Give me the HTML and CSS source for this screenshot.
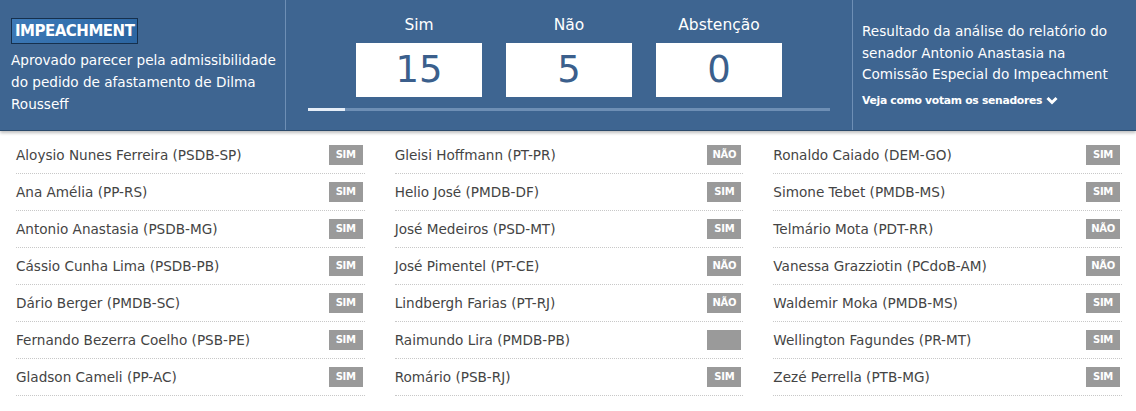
FILE: index.html
```html
<!DOCTYPE html>
<html lang="pt-BR">

<head>
    <meta charset="UTF-8">
    <title>Impeachment - Votação na Comissão</title>
    <link rel="stylesheet" href="styles.css">
</head>

<body>
    <header class="votes-header">
        <div class="header-left">
            <span class="tag">IMPEACHMENT</span>
            <p>Aprovado parecer pela admissibilidade do pedido de afastamento de Dilma Rousseff</p>
        </div>

        <div class="header-center">
            <div class="totals">
                <div class="total">
                    <span class="total-label">Sim</span>
                    <span class="total-box">15</span>
                </div>
                <div class="total">
                    <span class="total-label">Não</span>
                    <span class="total-box">5</span>
                </div>
                <div class="total">
                    <span class="total-label">Abstenção</span>
                    <span class="total-box">0</span>
                </div>
            </div>
            <div class="progress"><div class="progress-fill"></div></div>
        </div>

        <div class="header-right">
            <p>Resultado da análise do relatório do senador Antonio Anastasia na Comissão Especial do Impeachment</p>
            <a href="#lista" class="more-link">Veja como votam os senadores
                <svg width="12" height="9" viewBox="0 0 12 9"><path d="M1.5 2 L6 6.5 L10.5 2" fill="none" stroke="#fff" stroke-width="3"/></svg>
            </a>
        </div>
    </header>

    <section id="lista" class="senators">
        <ul class="column">
            <li><span>Aloysio Nunes Ferreira (PSDB-SP)</span><b class="vote">SIM</b></li>
            <li><span>Ana Amélia (PP-RS)</span><b class="vote">SIM</b></li>
            <li><span>Antonio Anastasia (PSDB-MG)</span><b class="vote">SIM</b></li>
            <li><span>Cássio Cunha Lima (PSDB-PB)</span><b class="vote">SIM</b></li>
            <li><span>Dário Berger (PMDB-SC)</span><b class="vote">SIM</b></li>
            <li><span>Fernando Bezerra Coelho (PSB-PE)</span><b class="vote">SIM</b></li>
            <li><span>Gladson Cameli (PP-AC)</span><b class="vote">SIM</b></li>
        </ul>
        <ul class="column">
            <li><span>Gleisi Hoffmann (PT-PR)</span><b class="vote">NÃO</b></li>
            <li><span>Helio José (PMDB-DF)</span><b class="vote">SIM</b></li>
            <li><span>José Medeiros (PSD-MT)</span><b class="vote">SIM</b></li>
            <li><span>José Pimentel (PT-CE)</span><b class="vote">NÃO</b></li>
            <li><span>Lindbergh Farias (PT-RJ)</span><b class="vote">NÃO</b></li>
            <li><span>Raimundo Lira (PMDB-PB)</span><b class="vote"></b></li>
            <li><span>Romário (PSB-RJ)</span><b class="vote">SIM</b></li>
        </ul>
        <ul class="column">
            <li><span>Ronaldo Caiado (DEM-GO)</span><b class="vote">SIM</b></li>
            <li><span>Simone Tebet (PMDB-MS)</span><b class="vote">SIM</b></li>
            <li><span>Telmário Mota (PDT-RR)</span><b class="vote">NÃO</b></li>
            <li><span>Vanessa Grazziotin (PCdoB-AM)</span><b class="vote">NÃO</b></li>
            <li><span>Waldemir Moka (PMDB-MS)</span><b class="vote">SIM</b></li>
            <li><span>Wellington Fagundes (PR-MT)</span><b class="vote">SIM</b></li>
            <li><span>Zezé Perrella (PTB-MG)</span><b class="vote">SIM</b></li>
        </ul>
    </section>
</body>

</html>
```

FILE: styles.css
```css
:root {
    --blue: #3e6591;
    --blue-line: #6e8fb5;
    --text: #444444;
    --badge: #9a9a9a;
    --white: #ffffff;
}

* {
    box-sizing: border-box;
    margin: 0;
    padding: 0;
}

body {
    font-family: 'DejaVu Sans', Verdana, sans-serif;
    background-color: var(--white);
    color: var(--text);
}

/* header */

.votes-header {
    display: flex;
    height: 131px;
    background-color: var(--blue);
    border-bottom: 1px solid #2c4a6b;
    box-shadow: 0 2px 3px rgba(0, 0, 0, 0.25);
    color: var(--white);
}

.header-left {
    width: 286px;
    padding: 18px 8px 0 11px;
    border-right: 1px solid var(--blue-line);
}

.tag {
    display: inline-block;
    padding: 2px 3px 2px 3px;
    border: 1px solid #16304d;
    background: linear-gradient(135deg, #3d7ab8 0%, #2b64a0 100%);
    font-size: 15px;
    font-weight: bold;
    letter-spacing: -0.5px;
    line-height: 20px;
}

.header-left p {
    margin-top: 6px;
    font-size: 13.6px;
    line-height: 21.8px;
}

.header-center {
    flex: 1;
    padding: 11px 22px 0 22px;
    border-right: 1px solid var(--blue-line);
}

.totals {
    display: flex;
    justify-content: center;
    gap: 24px;
}

.total {
    display: flex;
    flex-direction: column;
    align-items: center;
}

.total-label {
    font-size: 15.5px;
    line-height: 28px;
    margin-bottom: 4px;
}

.total-box {
    width: 126px;
    height: 54px;
    background-color: var(--white);
    color: #3b5f8c;
    font-size: 37px;
    line-height: 54px;
    text-align: center;
}

.progress {
    margin-top: 11px;
    height: 3px;
    background-color: var(--blue-line);
}

.progress-fill {
    width: 37px;
    height: 3px;
    background-color: #e6eef8;
}

.header-right {
    width: 283px;
    padding: 21px 6px 0 9px;
}

.header-right p {
    font-size: 13.6px;
    line-height: 21.5px;
}

.more-link {
    display: inline-flex;
    align-items: center;
    gap: 4px;
    margin-top: 8px;
    color: var(--white);
    font-size: 10.8px;
    font-weight: bold;
    letter-spacing: -0.3px;
    text-decoration: none;
}

/* list */

.senators {
    display: flex;
    padding-top: 6px;
}

.column {
    flex: 1;
    list-style: none;
    padding: 0 14px 0 16px;
}

.column li {
    display: flex;
    justify-content: space-between;
    align-items: center;
    height: 37px;
    padding: 0 2px 0 0;
    border-bottom: 1px dotted #c8c8c8;
    font-size: 13.6px;
}

.vote {
    width: 34px;
    height: 20px;
    background-color: var(--badge);
    color: var(--white);
    font-size: 10px;
    line-height: 20px;
    text-align: center;
    letter-spacing: -0.3px;
}
```
